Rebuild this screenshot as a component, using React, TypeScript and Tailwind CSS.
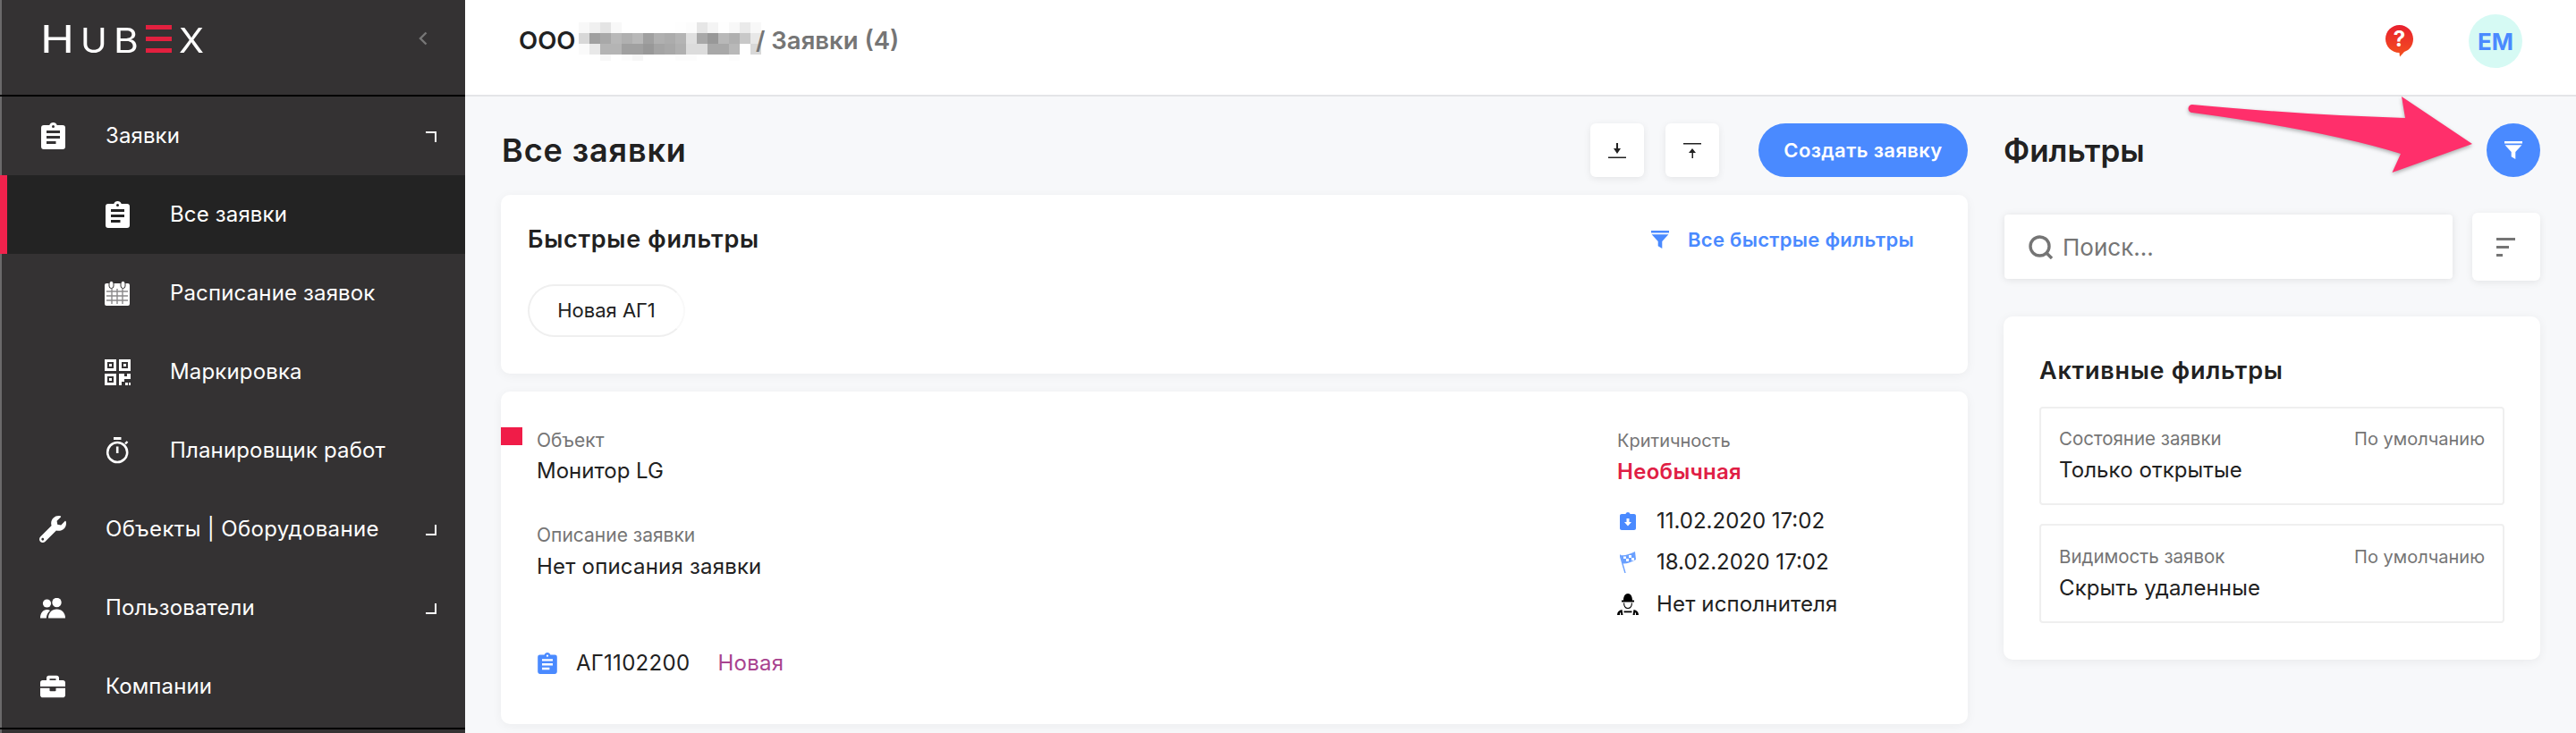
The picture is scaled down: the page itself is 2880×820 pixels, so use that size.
import React from "react";
import { FaWrench, FaBriefcase } from "react-icons/fa";

const CLIP = "M19,3H14.82C14.4,1.84 13.3,1 12,1C10.7,1 9.6,1.84 9.18,3H5A2,2 0 0,0 3,5V19A2,2 0 0,0 5,21H19A2,2 0 0,0 21,19V5A2,2 0 0,0 19,3M12,3A1,1 0 0,1 13,4A1,1 0 0,1 12,5A1,1 0 0,1 11,4A1,1 0 0,1 12,3M7,7H17V9H7V7M7,11H17V13H7V11M7,15H14V17H7V15Z";

const Clip = ({ className }: { className: string }) => (
  <svg viewBox="3 1 18 20" className={className} fill="currentColor"><path d={CLIP} /></svg>
);

const Calendar = () => (
  <svg viewBox="0 0 28 28" className="w-[28px] h-[28px]">
    <rect x="0" y="3" width="28" height="25" rx="2" fill="#fff" />
    <g stroke="#8a898a" strokeWidth="1.4">
      <path d="M2 12H26M2 17H26M2 22H26M8 9V26M14 9V26M20 9V26" />
    </g>
    <rect x="5" y="0.5" width="5" height="8" rx="2.5" fill="#fff" stroke="#343233" strokeWidth="1" />
    <rect x="18" y="0.5" width="5" height="8" rx="2.5" fill="#fff" stroke="#343233" strokeWidth="1" />
  </svg>
);

const Qr = () => (
  <svg viewBox="0 0 29 29" className="w-[29px] h-[29px]" fill="#fff">
    <path fillRule="evenodd" d="M0 0H13V13H0ZM3 3V10H10V3ZM5 5H8V8H5ZM16 0H29V13H16ZM19 3V10H26V3ZM21 5H24V8H21ZM0 16H13V29H0ZM3 19V26H10V19ZM5 21H8V24H5Z" />
    <path d="M16 16H22V19H25V16H29V22H22V25H19V29H16ZM23 26H26V29H23ZM27 26H29V29H27Z" />
  </svg>
);

const Timer = () => (
  <svg viewBox="0 0 27 30" className="w-[27px] h-[30px]" fill="none" stroke="#fff">
    <circle cx="13.2" cy="17" r="11" strokeWidth="2.6" />
    <path d="M9 1.5H17.5" strokeWidth="3" />
    <path d="M13.2 10.5V18" strokeWidth="2.6" />
    <path d="M22 7.5L24.5 5" strokeWidth="2.4" />
  </svg>
);

const Users = () => (
  <svg viewBox="0 0 28 23" className="w-[28px] h-[23px]" fill="#fff">
    <circle cx="7.5" cy="6" r="4.6" />
    <circle cx="18.5" cy="5" r="5.2" />
    <path d="M0 22.5C0 17 3 13 7.5 13C8.8 13 10 13.3 11 14C8.5 16 7 19 6.8 22.5Z" />
    <path d="M9 22.5C9 16.5 13 12.5 18.5 12.5C24 12.5 28 16.5 28 22.5Z" />
  </svg>
);

const Funnel = ({ className, color }: { className: string; color: string }) => (
  <svg viewBox="0 0 20 20" className={className} fill={color}>
    <path d="M0 0H20V2.6H0ZM0.6 4.2H19.4L12.3 12V20L7.7 17.2V12Z" />
  </svg>
);

const Corner = ({ up }: { up: boolean }) => (
  <span className={up ? "ml-auto mr-[32px] mb-[-1px] w-[12px] h-[12px] border-t-2 border-r-2 border-white" : "ml-auto mr-[32px] mb-[-1px] w-[12px] h-[12px] border-b-2 border-r-2 border-white"} />
);

const Top = ({ icon, text, corner, spaced }: { icon: React.ReactNode; text: string; corner?: "up" | "down"; spaced?: boolean }) => (
  <div className="h-[88px] flex items-center pl-[42px] text-white">
    <span className="w-[30px] flex justify-center">{icon}</span>
    <span className={spaced ? "ml-[44px] text-[24px] tracking-[0.35px]" : "ml-[44px] text-[24px] tracking-[0.1px]"}>{text}</span>
    {corner && <Corner up={corner === "up"} />}
  </div>
);

const Sub = ({ icon, text }: { icon: React.ReactNode; text: string }) => (
  <div className="h-[88px] flex items-center pl-[114px] text-white">
    <span className="w-[30px] flex justify-center">{icon}</span>
    <span className="ml-[44px] text-[24px] tracking-[0.15px]">{text}</span>
  </div>
);

const Logo = () => (
  <div className="h-[106px] flex items-center pl-[45px] pr-[42px] pb-[20px] text-white">
    <div className="flex items-end h-[31px] font-normal leading-none">
      <span className="w-[45px] text-[42px] h-[31px] leading-[31px] scale-x-[1.22] origin-left">H</span>
      <span className="w-[37px] text-[38px] h-[28px] leading-[28px] scale-x-[1.05] origin-left">U</span>
      <span className="w-[36px] text-[38px] h-[28px] leading-[28px] scale-x-[1.12] origin-left">B</span>
      <span className="w-[29px] h-[31px] flex flex-col justify-between mr-[8px]">
        <span className="h-[5px] bg-[#e2203f]" />
        <span className="h-[5px] bg-[#e2203f]" />
        <span className="h-[5px] bg-[#e2203f]" />
      </span>
      <span className="w-[28px] text-[38px] h-[28px] leading-[28px] scale-x-[1.08] origin-left">X</span>
    </div>
    <svg viewBox="0 0 10 16" className="ml-auto w-[10px] h-[16px]" fill="none" stroke="#777" strokeWidth="2.4"><path d="M8.5 1.5L2 8L8.5 14.5" /></svg>
  </div>
);

const Sidebar = () => (
  <aside className="w-[520px] shrink-0 h-full bg-[#343233] border-l-2 border-[#6b6a6b]">
    <div className="border-b-2 border-black -ml-[2px]"><Logo /></div>
    <nav className="border-b-2 border-black pb-[2px] -ml-[2px] pl-[2px]">
      <Top icon={<Clip className="w-[27px] h-[30px]" />} text="Заявки" corner="up" />
      <div className="h-[88px] flex items-center pl-[108px] -ml-[2px] bg-[#232323] border-l-[8px] border-[#f0224c] text-white">
        <span className="w-[30px] flex justify-center"><Clip className="w-[27px] h-[30px]" /></span>
        <span className="ml-[44px] text-[24px] tracking-[0.15px]">Все заявки</span>
      </div>
      <Sub icon={<Calendar />} text="Расписание заявок" />
      <Sub icon={<Qr />} text="Маркировка" />
      <Sub icon={<Timer />} text="Планировщик работ" />
      <Top icon={<FaWrench className="w-[30px] h-[30px]" />} text="Объекты | Оборудование" corner="down" spaced />
      <Top icon={<Users />} text="Пользователи" corner="down" />
      <Top icon={<FaBriefcase className="w-[30px] h-[28px]" />} text="Компании" />
    </nav>
  </aside>
);

const MOSAIC = [
  ["f8","f0","e4","f8","ff","ff","ff","ff","ff","fe","fc","e6","f4","fe","f8","ea","f8"],
  ["d8","a0","a8","b8","b0","b8","a0","b0","ac","b4","e0","a8","98","b8","b0","c8","e8"],
  ["fa","e8","b4","b4","a0","a0","98","a4","a8","b0","dc","dc","a8","a8","b8","ff","d8"],
  ["ff","ff","f8","ff","fc","f6","ff","ff","ff","fc","fc","ff","ff","ff","fc","ff","ff"],
];

const Mosaic = () => (
  <svg viewBox="0 0 204 43" className="w-[204px] h-[43px] shrink-0">
    {MOSAIC.map((row, r) =>
      row.map((v, c) => <rect key={`${r}-${c}`} x={c * 12} y={r * 12} width="12.5" height="12.5" fill={`#${v}${v}${v}`} />)
    )}
  </svg>
);

const Header = () => (
  <header className="h-[108px] shrink-0 bg-white border-b-2 border-[#e4e5e7] flex items-center pl-[60px] pr-[60px] pb-[14px]">
    <div className="flex items-center h-[46px] text-[27.5px] font-semibold">
      <span className="text-[#212121] w-[67px] whitespace-nowrap">ООО</span>
      <Mosaic />
      <span className="text-[#757575] ml-[-6px]">/ Заявки (4)</span>
    </div>
    <svg viewBox="0 0 31 36" className="ml-auto w-[31px] h-[36px]">
      <defs>
        <linearGradient id="q" x1="0" y1="0" x2="0" y2="1">
          <stop offset="0" stopColor="#e8202f" />
          <stop offset="1" stopColor="#f4511e" />
        </linearGradient>
      </defs>
      <path d="M15.5 0C24 0 31 7 31 15.5C31 22.5 27 28 21 30L16 35.5L15.5 31C7 31 0 24 0 15.5C0 7 7 0 15.5 0Z" fill="url(#q)" />
      <text x="15.5" y="23.5" textAnchor="middle" fontSize="24" fontWeight="700" fill="#fff" fontFamily="Inter, sans-serif">?</text>
    </svg>
    <div className="ml-[62px] w-[60px] h-[60px] rounded-full bg-[#d6faf4] flex items-center justify-center text-[#4a8aff] text-[26px] font-bold">EM</div>
  </header>
);

const SquareBtn = ({ children }: { children: React.ReactNode }) => (
  <button className="w-[60px] h-[60px] rounded-[6px] bg-white shadow-[0_2px_8px_rgba(0,0,0,0.08)] flex items-center justify-center">{children}</button>
);

const LeftCol = () => (
  <div className="w-[1640px] shrink-0">
    <div className="h-[60px] flex items-center">
      <h1 className="text-[36px] tracking-[0.9px] font-semibold text-[#212121] ml-[1px]">Все заявки</h1>
      <div className="ml-auto">
        <SquareBtn>
          <svg viewBox="0 0 20 17" className="w-[20px] h-[17px]" fill="#212121"><path d="M0 15.5H20V17H0ZM9 0H11V6H14L10 12L6 6H9Z" /></svg>
        </SquareBtn>
      </div>
      <div className="ml-[24px]">
        <SquareBtn>
          <svg viewBox="0 0 20 17" className="w-[20px] h-[17px]" fill="#212121"><path d="M0 0H20V1.5H0ZM10 6L14 11H11V17H9.5V11H6Z" /></svg>
        </SquareBtn>
      </div>
      <button className="ml-[44px] w-[234px] h-[60px] rounded-full bg-[#4a8aff] text-white text-[22px] tracking-[0.4px] font-semibold">Создать заявку</button>
    </div>
    <section className="mt-[20px] h-[200px] bg-white rounded-[10px] shadow-[0_2px_12px_rgba(0,0,0,0.05)] pt-[35px] pl-[30px] pr-[60px]">
      <div className="h-[30px] flex items-center">
        <h2 className="text-[27px] tracking-[0.7px] font-semibold text-[#212121]">Быстрые фильтры</h2>
        <Funnel className="ml-auto w-[20px] h-[20px]" color="#4a8aff" />
        <span className="ml-[21px] text-[22px] tracking-[0.3px] font-semibold text-[#4a8aff]">Все быстрые фильтры</span>
      </div>
      <div className="mt-[35px] w-[176px] h-[59px] rounded-full border-2 border-[#efefef] border-r-[#f9f9f9] flex items-center justify-center text-[22px] text-[#212121]">Новая АГ1</div>
    </section>
    <section className="relative mt-[20px] h-[372px] bg-white rounded-[10px] shadow-[0_2px_12px_rgba(0,0,0,0.05)] pt-[40px] flex justify-between">
      <span className="absolute left-0 top-[40px] w-[24px] h-[20px] bg-[#f01c48]" />
      <div className="pl-[40px]">
        <div className="h-[30px] leading-[30px] text-[21px] text-[#757575]">Объект</div>
        <div className="mt-[4px] h-[30px] leading-[30px] text-[24px] text-[#212121]">Монитор LG</div>
        <div className="mt-[42px] h-[30px] leading-[30px] text-[21px] text-[#757575]">Описание заявки</div>
        <div className="mt-[5px] h-[30px] leading-[30px] text-[24px] tracking-[0.2px] text-[#212121]">Нет описания заявки</div>
        <div className="mt-[78px] h-[30px] flex items-center text-[24px] tracking-[0.3px]">
          <Clip className="w-[24px] h-[24px] text-[#4a8aff]" />
          <span className="ml-[20px] text-[#212121]">АГ1102200</span>
          <span className="ml-[31px] text-[#a8438f]">Новая</span>
        </div>
      </div>
      <div className="w-[392px]">
        <div className="h-[30px] leading-[30px] text-[20px] text-[#757575]">Критичность</div>
        <div className="mt-[5px] h-[30px] leading-[30px] text-[24px] tracking-[0.3px] font-semibold text-[#e01e45]">Необычная</div>
        <div className="mt-[25px] h-[30px] flex items-center">
          <span className="w-[24px] flex justify-center">
            <svg viewBox="0 0 18 20" className="w-[18px] h-[20px]"><path fill="#4a8aff" d="M2 2H6.5C6.8 .8 7.8 0 9 0C10.2 0 11.2 .8 11.5 2H16C17.1 2 18 2.9 18 4V18C18 19.1 17.1 20 16 20H2C.9 20 0 19.1 0 18V4C0 2.9 .9 2 2 2Z" /><path fill="#fff" d="M7.5 7H10.5V11H13L9 15.5L5 11H7.5Z" /></svg>
          </span>
          <span className="ml-[20px] text-[24px] text-[#212121]">11.02.2020 17:02</span>
        </div>
        <div className="mt-[16px] h-[30px] flex items-center">
          <span className="w-[24px] flex justify-center">
            <svg viewBox="0 0 18 24" className="w-[18px] h-[24px]">
              <path d="M0 3.5L6 24" stroke="#6aa0ff" strokeWidth="1.4" />
              <path d="M.6 4C5 5 11 3 17 0L18 9C13 12 7 14 3.2 13.5Z" fill="#6aa0ff" />
              <path d="M4 5.5H7V8H4ZM10 4H13V7H10ZM7 8H10V11H7ZM13 7H16V10H13Z" fill="#fff" />
            </svg>
          </span>
          <span className="ml-[20px] text-[24px] text-[#212121]">18.02.2020 17:02</span>
        </div>
        <div className="mt-[17px] h-[30px] flex items-center">
          <svg viewBox="0 0 24 24" className="w-[24px] h-[24px]">
            <path d="M7 7.5C7 3 9 0 12 0C15 0 17 3 17 7.5H19V9.5H5V7.5Z" fill="#000" />
            <path d="M7.6 10.5C7.6 14 9.2 16.5 12 16.5C14.8 16.5 16.4 14 16.4 10.5" fill="none" stroke="#000" strokeWidth="1.1" />
            <path d="M0 24C0 20.5 2 18.8 5.5 18L6.5 24H4.2V21.5H3V24Z" fill="#000" />
            <path d="M24 24C24 20.5 22 18.8 18.5 18L17.5 24H19.8V21.5H21V24Z" fill="#000" />
            <path d="M7.5 19.5H16.5V21.3H7.5Z" fill="#000" />
          </svg>
          <span className="ml-[20px] text-[24px] tracking-[0.15px] text-[#212121]">Нет исполнителя</span>
        </div>
      </div>
    </section>
  </div>
);

const FilterBox = ({ label, value, top }: { label: string; value: string; top: string }) => (
  <div className={top}>
    <div className="flex justify-between h-[30px] leading-[30px] text-[20px] text-[#757575]">
      <span className="text-[20.5px]">{label}</span>
      <span>По умолчанию</span>
    </div>
    <div className="mt-[5px] h-[30px] leading-[30px] text-[24px] tracking-[0.1px] text-[#212121]">{value}</div>
  </div>
);

const RightCol = () => (
  <div className="relative w-[600px] shrink-0">
    <svg viewBox="0 0 340 100" className="absolute left-[200px] top-[-38px] w-[340px] h-[100px] z-10 drop-shadow-[0_2px_2px_rgba(0,0,0,0.3)]">
      <path d="M11 17Q140 29 249 32L245 8L324 61L234.5 93L244 72Q160 46 11 26A4.5 4.5 0 0 1 11 17Z" fill="#ff2f6b" />
    </svg>
    <div className="h-[60px] flex items-center justify-between">
      <h1 className="text-[35px] font-semibold text-[#212121]">Фильтры</h1>
      <button className="w-[60px] h-[60px] rounded-full bg-[#4a8aff] flex items-center justify-center">
        <Funnel className="w-[20px] h-[20px]" color="#fff" />
      </button>
    </div>
    <div className="mt-[40px] h-[76px] flex items-center justify-between">
      <div className="ml-[1px] w-[501px] h-[72px] bg-white rounded-[4px] shadow-[0_1px_8px_rgba(0,0,0,0.1)] flex items-center pl-[26px]">
        <svg viewBox="0 0 29 27" className="w-[29px] h-[27px]" fill="none" stroke="#757575" strokeWidth="3.4"><circle cx="13.5" cy="12.5" r="10.5" /><path d="M21 20L27 26" /></svg>
        <span className="ml-[10px] text-[26px] text-[#757575]">Поиск...</span>
      </div>
      <button className="w-[76px] h-[76px] bg-white rounded-[6px] shadow-[0_2px_8px_rgba(0,0,0,0.08)] flex flex-col items-start justify-center pl-[27px] gap-[6px]">
        <span className="w-[21px] h-[3px] bg-[#757575]" />
        <span className="w-[14px] h-[3px] bg-[#757575]" />
        <span className="w-[7px] h-[3px] bg-[#757575]" />
      </button>
    </div>
    <section className="mt-[40px] h-[384px] bg-white rounded-[10px] shadow-[0_2px_12px_rgba(0,0,0,0.06)] px-[40px] pt-[46px]">
      <h2 className="h-[30px] leading-[30px] text-[27px] tracking-[0.75px] font-semibold text-[#212121]">Активные фильтры</h2>
      <FilterBox top="mt-[25px] h-[110px] border-2 border-[#efefef] rounded-[4px] px-[20px] pt-[19px]" label="Состояние заявки" value="Только открытые" />
      <FilterBox top="mt-[21px] h-[111px] border-2 border-[#efefef] rounded-[4px] px-[20px] pt-[20px]" label="Видимость заявок" value="Скрыть удаленные" />
    </section>
  </div>
);

export default function App() {
  return (
    <div className="w-[2880px] h-[820px] overflow-hidden flex font-['Inter','Liberation_Sans',sans-serif]">
      <Sidebar />
      <main className="flex-1 flex flex-col h-full">
        <Header />
        <div className="flex-1 bg-[#f7f8fa] px-[40px] pt-[30px] flex gap-[40px]">
          <LeftCol />
          <RightCol />
        </div>
      </main>
    </div>
  );
}
